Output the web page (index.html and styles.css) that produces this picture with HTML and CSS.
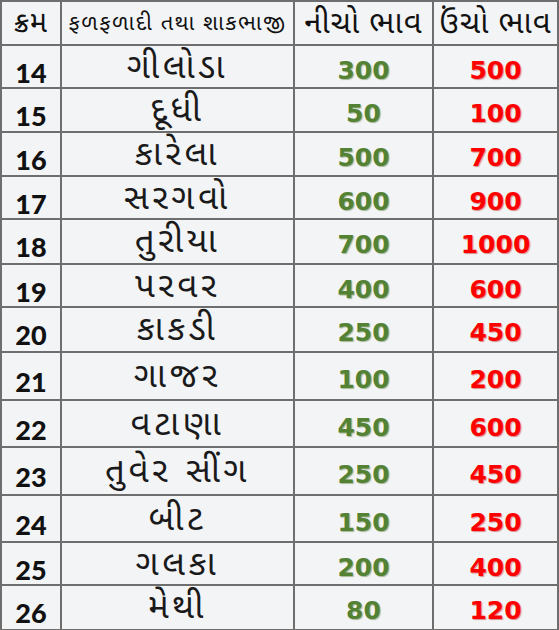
FILE: index.html
```html
<!DOCTYPE html>
<html lang="gu">
<head>
<meta charset="utf-8">
<title>ભાવ</title>
<link rel="stylesheet" href="styles.css">
</head>
<body>
<table class="price-table">
  <colgroup>
    <col class="c-no"><col class="c-name"><col class="c-low"><col class="c-high">
  </colgroup>
  <thead>
    <tr class="head-row">
      <th class="h-no">ક્રમ</th>
      <th class="h-name">ફળફળાદી તથા શાકભાજી</th>
      <th class="h-price">નીચો ભાવ</th>
      <th class="h-price">ઉંચો ભાવ</th>
    </tr>
  </thead>
  <tbody>
    <tr><td class="no">14</td><td class="name">ગીલોડા</td><td class="low">300</td><td class="high">500</td></tr>
    <tr><td class="no">15</td><td class="name">દૂધી</td><td class="low">50</td><td class="high">100</td></tr>
    <tr><td class="no">16</td><td class="name">કારેલા</td><td class="low">500</td><td class="high">700</td></tr>
    <tr><td class="no">17</td><td class="name">સરગવો</td><td class="low">600</td><td class="high">900</td></tr>
    <tr><td class="no">18</td><td class="name">તુરીયા</td><td class="low">700</td><td class="high">1000</td></tr>
    <tr><td class="no">19</td><td class="name">પરવર</td><td class="low">400</td><td class="high">600</td></tr>
    <tr><td class="no">20</td><td class="name">કાકડી</td><td class="low">250</td><td class="high">450</td></tr>
    <tr><td class="no">21</td><td class="name">ગાજર</td><td class="low">100</td><td class="high">200</td></tr>
    <tr><td class="no">22</td><td class="name">વટાણા</td><td class="low">450</td><td class="high">600</td></tr>
    <tr><td class="no">23</td><td class="name">તુવેર સીંગ</td><td class="low">250</td><td class="high">450</td></tr>
    <tr><td class="no">24</td><td class="name">બીટ</td><td class="low">150</td><td class="high">250</td></tr>
    <tr><td class="no">25</td><td class="name">ગલકા</td><td class="low">200</td><td class="high">400</td></tr>
    <tr><td class="no">26</td><td class="name">મેથી</td><td class="low">80</td><td class="high">120</td></tr>
  </tbody>
</table>
</body>
</html>
```

FILE: styles.css
```css
html, body {
  margin: 0;
  padding: 0;
  background: #f7f8f9;
}
body {
  width: 559px;
  height: 630px;
  overflow: hidden;
  font-family: "Noto Sans Gujarati", "Lohit Gujarati", "Shruti", "Noto Sans", "DejaVu Sans", sans-serif;
}
.price-table {
  border-collapse: collapse;
  table-layout: fixed;
  width: 557px;
  background: #f3f4f6;
}
.c-no { width: 60px; }
.c-name { width: 233px; }
.c-low { width: 139px; }
.c-high { width: 125px; }
.price-table th,
.price-table td {
  border: 2px solid #6e6e6e;
  padding: 0;
  text-align: center;
  vertical-align: top;
  white-space: nowrap;
  line-height: 1;
}
.head-row { height: 44px; }
.head-row th {
  font-weight: normal;
  color: #111;
  vertical-align: middle;
  padding-top: 4px;
}
.h-no { font-size: 29px; letter-spacing: 1px; }
.h-name { font-size: 22px; letter-spacing: 1.5px; }
.h-price { font-size: 31px; letter-spacing: 1px; }
tbody tr { height: 44px; }
tbody tr:nth-child(1) { height: 43px; }
tbody tr:nth-child(4) { height: 43px; }
tbody tr:nth-child(5) { height: 45px; }
tbody tr:nth-child(6) { height: 42px; }
tbody tr:nth-child(7) { height: 45px; }
tbody tr:nth-child(8) { height: 48px; }
tbody tr:nth-child(9) { height: 47px; }
tbody tr:nth-child(10) { height: 48px; }
tbody tr:nth-child(11) { height: 47px; }
tbody tr:nth-child(12) { height: 43px; }
tbody tr:nth-child(13) { height: 45px; }
tbody tr:nth-child(n+8):nth-child(-n+11) td { padding-top: 2px; }
.no {
  font-family: "Lato", "Open Sans", sans-serif;
  font-weight: 900;
  font-size: 27px;
  color: #111;
  height: 27px;
}
.name {
  font-size: 35px;
  letter-spacing: 3.5px;
  word-spacing: 2px;
  color: #1a1a1a;
  height: 35px;
}
.low, .high {
  font-family: "DejaVu Sans", sans-serif;
  font-weight: bold;
  font-size: 25px;
  height: 25px;
}
.price-table tbody .no { padding-top: 13px; }
.price-table tbody .name { padding-top: 6px; }
.price-table tbody .low,
.price-table tbody .high { padding-top: 12px; }
.price-table tbody tr:nth-child(n+8):nth-child(-n+11) .no { padding-top: 15px; }
.price-table tbody tr:nth-child(n+8):nth-child(-n+11) .name { padding-top: 8px; }
.price-table tbody tr:nth-child(n+8):nth-child(-n+11) .low,
.price-table tbody tr:nth-child(n+8):nth-child(-n+11) .high { padding-top: 14px; }
.low {
  color: #548235;
  text-shadow: 1px 1px 1px #a8b89a;
}
.high {
  color: #f00;
  text-shadow: 1px 1px 1px #d49090;
}
```
